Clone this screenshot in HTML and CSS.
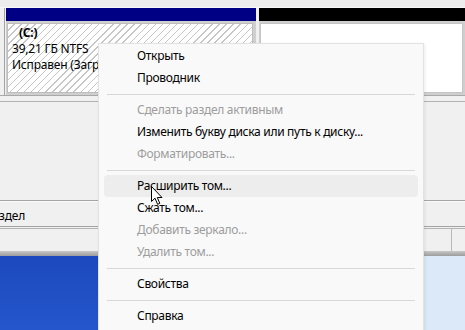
FILE: index.html
```html
<!DOCTYPE html>
<html lang="ru">
<head>
<meta charset="utf-8">
<title>Управление дисками</title>
<link rel="stylesheet" href="styles.css">
</head>
<body>
<div class="screen">
  <div class="top"></div>
  <div class="disk">
    <div class="part part-c">
      <div class="part-head head-blue"></div>
      <div class="part-body">
        <div class="hatch">
          <div class="vol-name">(C:)</div>
          <div class="vol-line">39,21 ГБ NTFS</div>
          <div class="vol-line">Исправен (Загр</div>
        </div>
      </div>
    </div>
    <div class="part part-r">
      <div class="part-head head-black"></div>
      <div class="part-body"><div class="blank"></div></div>
    </div>
  </div>
  <div class="gap"></div>
  <div class="legend"><span class="legend-text">здел</span></div>
  <div class="status"><div class="pane pane-main"></div><div class="pane"></div></div>
  <div class="bar"></div>
  <div class="bottom"><div class="blue"></div><div class="lightblue"></div></div>

  <div class="menu">
    <div class="item">Открыть</div>
    <div class="item">Проводник</div>
    <div class="sep"></div>
    <div class="item disabled">Сделать раздел активным</div>
    <div class="item">Изменить букву диска или путь к диску...</div>
    <div class="item disabled">Форматировать...</div>
    <div class="sep"></div>
    <div class="item hover">Расширить том...</div>
    <div class="item">Сжать том...</div>
    <div class="item disabled">Добавить зеркало...</div>
    <div class="item disabled">Удалить том...</div>
    <div class="sep"></div>
    <div class="item">Свойства</div>
    <div class="sep"></div>
    <div class="item">Справка</div>
  </div>

  <svg class="cursor" width="13" height="20" viewBox="0 0 13 20">
    <path d="M0.5 0.5 L0.5 15.5 L4 12.2 L6.6 18.3 L8.8 17.4 L6.3 11.5 L11 11.5 Z" fill="#fff" stroke="#000" stroke-width="1" stroke-linejoin="miter"/>
  </svg>
</div>
</body>
</html>
```

FILE: styles.css
```css
* { box-sizing: border-box; }
html, body { margin: 0; padding: 0; }
body {
  width: 465px;
  height: 330px;
  overflow: hidden;
  background: #f0f0f0;
  font-family: "Noto Sans", "Open Sans", sans-serif;
  font-size: 12px;
  letter-spacing: -0.2px;
  color: #000;
}
.screen {
  position: relative;
  width: 465px;
  height: 330px;
  overflow: hidden;
}
.top {
  height: 8px;
  background: #ededed;
  border-bottom: 1px solid #f8f8f8;
}
.disk {
  display: flex;
  height: 88px;
  padding-left: 4px;
  border-bottom: 1px solid #a9a9a9;
  background: #f0f0f0;
}
.part {
  display: flex;
  flex-direction: column;
}
.part-c {
  width: 252px;
  border-left: 1px solid #a4a4a4;
  padding: 0 0 0 1px;
}
.part-r {
  flex: 1;
  margin-left: 3px;
}
.part-head {
  height: 13px;
  flex: none;
}
.head-blue { background: #000084; }
.head-black { background: #000; }
.part-body {
  flex: 1;
  padding: 2px 2px 2px 1px;
  background: #cfcfcf;
  display: flex;
}
.part-c .part-body { padding: 2px 3px 2px 1px; }
.hatch {
  flex: 1;
  border: 1px solid #bdbdbd;
  background-color: #fff;
  background-image: repeating-linear-gradient(135deg, #fff 0, #fff 4px, #c6c6c6 4px, #c6c6c6 5px);
  padding: 1px 0 0 4px;
  overflow: hidden;
  white-space: nowrap;
  line-height: 16px;
}
.vol-name { font-weight: bold; padding-left: 7px; }
.blank {
  flex: 1;
  border: 1px solid #c4c4c4;
  background: #fff;
}
.gap {
  margin-top: 5px;
  border-top: 1px solid #b2b2b2;
  height: 99px;
}
.legend {
  height: 27px;
  border-top: 1px solid #a4a4a4;
  border-bottom: 1px solid #a4a4a4;
  box-shadow: inset 0 1px 0 #fbfbfb;
  padding-top: 5px;
  line-height: 20px;
  white-space: nowrap;
  overflow: hidden;
}
.legend-text { margin-left: -1px; }
.status {
  display: flex;
  margin-top: 1px;
  height: 23px;
  border-top: 1px solid #b4b4b4;
}
.pane { height: 100%; }
.pane-main { width: 452px; border-right: 1px solid #b9b9b9; }
.pane:last-child { flex: 1; }
.bar {
  height: 5px;
  background: linear-gradient(#c8c8c8, #9c9c9c);
}
.bottom {
  display: flex;
  height: 74px;
}
.blue {
  width: 260px;
  background: linear-gradient(#1c49be, #2556cb);
}
.lightblue {
  flex: 1;
  background: #dbe9f8;
}
.menu {
  position: absolute;
  left: 98px;
  top: 43px;
  width: 326px;
  height: 300px;
  background: #f9f9f9;
  border: 1px solid #e2e2e2;
  padding-top: 1px;
  box-shadow: 1px 1px 3px rgba(0,0,0,0.08);
  letter-spacing: -0.3px;
}
.item {
  height: 22px;
  line-height: 22px;
  margin: 0 5px;
  padding-left: 33px;
  border-radius: 4px;
  white-space: nowrap;
  color: #000;
}
.item.disabled { color: #9d9d9d; }
.item.hover { background: #ededed; }
.sep {
  height: 1px;
  margin: 5px 8px 4px;
  background: #d8d8d8;
}
.cursor {
  position: absolute;
  left: 151px;
  top: 186px;
}
```
